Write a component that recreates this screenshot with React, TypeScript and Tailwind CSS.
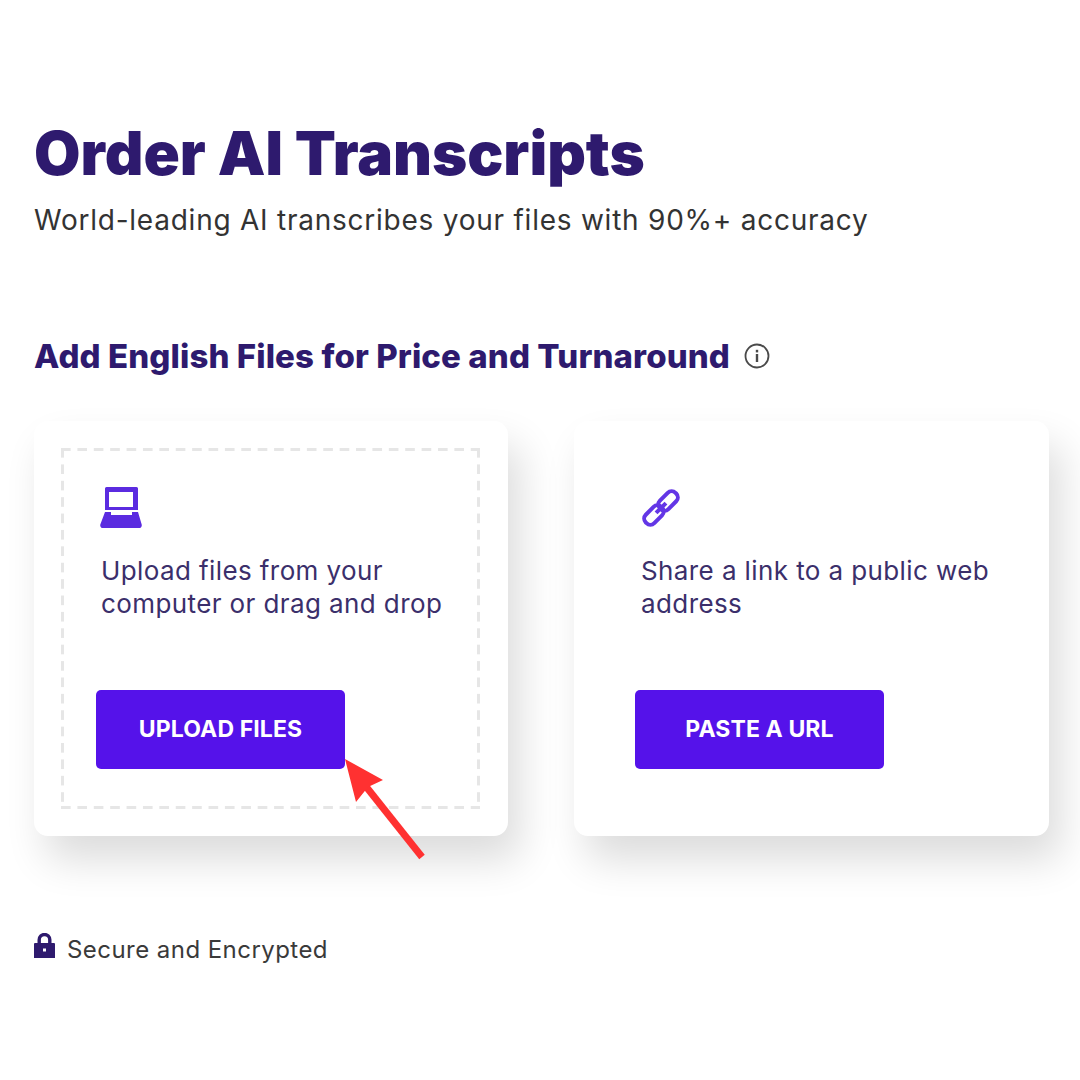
const font = "font-['Inter',sans-serif]";

function Laptop() {
  return (
    <svg width="44" height="44" viewBox="0 0 44 44" className="block" fill="#5b2be0">
      <path fillRule="evenodd" d="M6.500 0h30a1.500 1.500 0 0 1 1.500 1.500V23H5V1.500A1.500 1.500 0 0 1 6.500 0ZM9 5v15h24V5H9Z" />
      <path d="M5 25h6v3h21v-3h6l3.700 12.500c.4 1.800-.5 3.500-1.800 3.500H2.100c-1.300 0-2.200-1.700-1.800-3.500L5 25Z" />
    </svg>
  );
}

function LinkIcon() {
  return (
    <svg width="42" height="42" viewBox="0 0 42 42" fill="none" stroke="#6336e6" strokeWidth="4" className="block">
      <g transform="rotate(-45 21 21)">
        <rect x="0" y="15" width="22" height="12" rx="5.500" />
        <rect x="20" y="15" width="22" height="12" rx="5.500" />
        <path d="M14 21h14" />
      </g>
    </svg>
  );
}

function Info() {
  return (
    <svg width="26" height="26" viewBox="0 0 26 26" fill="none" className="block">
      <circle cx="13" cy="13" r="11.500" stroke="#4a4a4a" strokeWidth="1.800" />
      <rect x="11.800" y="11" width="2.400" height="8" fill="#4a4a4a" />
      <rect x="11.800" y="6.800" width="2.400" height="2.600" fill="#4a4a4a" />
    </svg>
  );
}

function Lock() {
  return (
    <svg width="21" height="25" viewBox="0 0 21 25" className="block">
      <path d="M5.200 12V6.800a5.300 5.300 0 0 1 10.600 0V12" fill="none" stroke="#2e1a6e" strokeWidth="3.400" />
      <path fillRule="evenodd" d="M1 10h19a1 1 0 0 1 1 1v14H0V11a1 1 0 0 1 1-1ZM9 15.500v3h3v-3H9Z" fill="#2e1a6e" />
    </svg>
  );
}

const dashedBox =
  "[background-image:linear-gradient(90deg,#e6e6e6_10px,transparent_10px),linear-gradient(90deg,#e6e6e6_10px,transparent_10px),linear-gradient(180deg,#e6e6e6_10px,transparent_10px),linear-gradient(180deg,#e6e6e6_10px,transparent_10px)] [background-size:16.400px_3px,16.400px_3px,3px_16.400px,3px_16.400px] [background-position:0_0,0_100%,0_0,100%_0] [background-repeat:repeat-x,repeat-x,repeat-y,repeat-y]";

function Card({ icon, text, label, dashed, wide }: { icon: React.ReactNode; text: [string, string]; label: string; dashed?: boolean; wide?: boolean }) {
  return (
    <div className={`${wide ? "w-[475px]" : "w-[474px]"} h-[415px] rounded-[14px] bg-white shadow-[12px_24px_40px_rgba(0,0,0,0.14)] p-[27px]`}>
      <div className={`w-[419px] h-[361px] pt-[39px] pl-[36px] ${dashed ? dashedBox : ""}`}>
        <div className="h-[50px] pl-[3px] flex items-start">{icon}</div>
        <p className="mt-[17px] pl-[4px] text-[26px] leading-[33px] tracking-[0.4px] text-[#3b2f6b]">
          {text[0]}
          <br />
          {text[1]}
        </p>
        <button className={`mt-[70px] ${wide ? "-ml-[2px]" : "-ml-[1px]"} w-[249px] h-[79px] rounded-[5px] bg-[#5512ea] text-white text-[23px] font-bold tracking-[0.1px] flex items-center justify-center`}>
          {label}
        </button>
      </div>
    </div>
  );
}

export default function App() {
  return (
    <div className={`${font} relative w-[1080px] h-[1080px] bg-white overflow-hidden pl-[34px] pt-[117px]`}>
      <h1 className="text-[60px] leading-[72px] font-black text-[#2e1a6e]">Order AI Transcripts</h1>
      <p className="mt-[12px] text-[28px] leading-[38px] text-[#333333] tracking-[0.76px]">
        World-leading AI transcribes your files with 90%+ accuracy
      </p>
      <div className="mt-[95px] flex items-center gap-[14px] h-[44px]">
        <h2 className="text-[33px] leading-[44px] font-extrabold tracking-[0.1px] text-[#2e1a6e]">Add English Files for Price and Turnaround</h2>
        <Info />
      </div>
      <div className="mt-[43px] flex gap-[66px]">
        <Card dashed icon={<Laptop />} text={["Upload files from your", "computer or drag and drop"]} label="UPLOAD FILES" />
        <Card wide icon={<LinkIcon />} text={["Share a link to a public web", "address"]} label="PASTE A URL" />
      </div>
      <div className="mt-[96px] flex items-start gap-[12px] h-[36px]">
        <div className="mt-[1px]"><Lock /></div>
        <span className="text-[24px] leading-[36px] text-[#3a3a3a] tracking-[0.45px]">Secure and Encrypted</span>
      </div>
      <svg width="100" height="110" viewBox="0 0 100 110" className="absolute left-[340px] top-[755px]">
        <path d="M82 102 L24 29" stroke="#ff3131" strokeWidth="7" fill="none" />
        <path d="M5 4 L43 25 L28 32 L16 47 Z" fill="#ff3131" />
      </svg>
    </div>
  );
}
